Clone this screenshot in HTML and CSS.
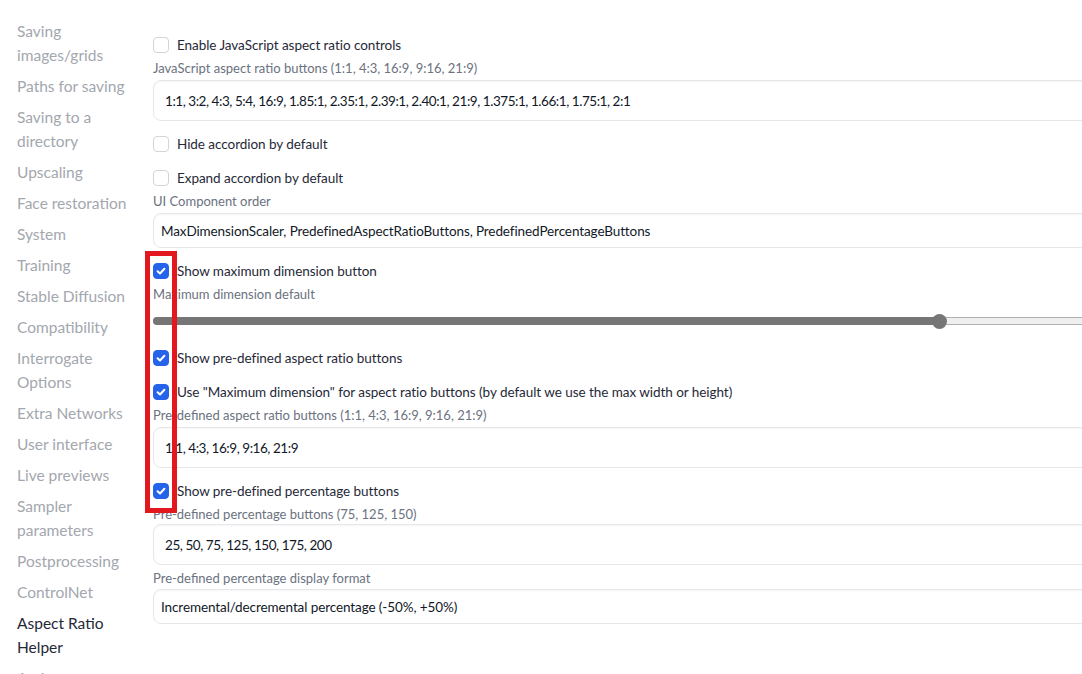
FILE: index.html
```html
<!DOCTYPE html>
<html lang="en">
<head>
<meta charset="utf-8">
<title>Settings - Aspect Ratio Helper</title>
<link rel="stylesheet" href="styles.css">
</head>
<body>
<div class="page">
  <nav class="sidebar">
    <a class="nav-item">Saving images/grids</a>
    <a class="nav-item">Paths for saving</a>
    <a class="nav-item">Saving to a directory</a>
    <a class="nav-item">Upscaling</a>
    <a class="nav-item">Face restoration</a>
    <a class="nav-item">System</a>
    <a class="nav-item">Training</a>
    <a class="nav-item">Stable Diffusion</a>
    <a class="nav-item">Compatibility</a>
    <a class="nav-item">Interrogate Options</a>
    <a class="nav-item">Extra Networks</a>
    <a class="nav-item">User interface</a>
    <a class="nav-item">Live previews</a>
    <a class="nav-item">Sampler parameters</a>
    <a class="nav-item">Postprocessing</a>
    <a class="nav-item">ControlNet</a>
    <a class="nav-item active">Aspect Ratio Helper</a>
    <a class="nav-item">Actions</a>
  </nav>

  <main class="settings">
    <label class="check-row first">
      <span class="box"></span>
      <span class="check-label">Enable JavaScript aspect ratio controls</span>
    </label>

    <div class="field">
      <div class="field-label">JavaScript aspect ratio buttons (1:1, 4:3, 16:9, 9:16, 21:9)</div>
      <div class="textbox">1:1, 3:2, 4:3, 5:4, 16:9, 1.85:1, 2.35:1, 2.39:1, 2.40:1, 21:9, 1.375:1, 1.66:1, 1.75:1, 2:1</div>
    </div>

    <label class="check-row">
      <span class="box"></span>
      <span class="check-label">Hide accordion by default</span>
    </label>

    <label class="check-row">
      <span class="box"></span>
      <span class="check-label">Expand accordion by default</span>
    </label>

    <div class="field">
      <div class="field-label">UI Component order</div>
      <div class="dropdown">MaxDimensionScaler, PredefinedAspectRatioButtons, PredefinedPercentageButtons</div>
    </div>

    <label class="check-row">
      <span class="box checked"><svg viewBox="0 0 16 16" width="16" height="16"><path d="M4.6 8.3 L7 10.5 L11.4 5.8" fill="none" stroke="#fff" stroke-width="2" stroke-linecap="round" stroke-linejoin="round"/></svg></span>
      <span class="check-label">Show maximum dimension button</span>
    </label>

    <div class="field-label slider-label">Maximum dimension default</div>
    <div class="slider">
      <div class="slider-track">
        <div class="slider-fill" style="width: 785px"></div>
        <div class="slider-thumb" style="left: 785px"></div>
      </div>
    </div>

    <label class="check-row">
      <span class="box checked"><svg viewBox="0 0 16 16" width="16" height="16"><path d="M4.6 8.3 L7 10.5 L11.4 5.8" fill="none" stroke="#fff" stroke-width="2" stroke-linecap="round" stroke-linejoin="round"/></svg></span>
      <span class="check-label">Show pre-defined aspect ratio buttons</span>
    </label>

    <label class="check-row">
      <span class="box checked"><svg viewBox="0 0 16 16" width="16" height="16"><path d="M4.6 8.3 L7 10.5 L11.4 5.8" fill="none" stroke="#fff" stroke-width="2" stroke-linecap="round" stroke-linejoin="round"/></svg></span>
      <span class="check-label">Use "Maximum dimension" for aspect ratio buttons (by default we use the max width or height)</span>
    </label>

    <div class="field">
      <div class="field-label">Pre-defined aspect ratio buttons (1:1, 4:3, 16:9, 9:16, 21:9)</div>
      <div class="textbox">1:1, 4:3, 16:9, 9:16, 21:9</div>
    </div>

    <label class="check-row">
      <span class="box checked"><svg viewBox="0 0 16 16" width="16" height="16"><path d="M4.6 8.3 L7 10.5 L11.4 5.8" fill="none" stroke="#fff" stroke-width="2" stroke-linecap="round" stroke-linejoin="round"/></svg></span>
      <span class="check-label">Show pre-defined percentage buttons</span>
    </label>

    <div class="field compact">
      <div class="field-label">Pre-defined percentage buttons (75, 125, 150)</div>
      <div class="textbox">25, 50, 75, 125, 150, 175, 200</div>
    </div>

    <div class="field last">
      <div class="field-label">Pre-defined percentage display format</div>
      <div class="dropdown">Incremental/decremental percentage (-50%, +50%)</div>
    </div>

    <div class="highlight"></div>
  </main>
</div>
</body>
</html>
```

FILE: styles.css
```css
html, body {
  margin: 0;
  padding: 0;
  background: #ffffff;
  overflow: hidden;
}

body {
  font-family: "Lato", "Noto Sans", "Liberation Sans", sans-serif;
  color: #1f2937;
  width: 1082px;
  height: 674px;
}

.page {
  display: flex;
  align-items: flex-start;
}

.sidebar {
  width: 118px;
  flex: 0 0 118px;
  padding: 19px 0 0 17px;
  display: flex;
  flex-direction: column;
  gap: 7px;
}

.nav-item {
  font-size: 15.5px;
  line-height: 24px;
  color: #a3a7ae;
  display: block;
}

.nav-item.active {
  color: #1f2937;
}

.settings {
  position: relative;
  margin-left: 18px;
  width: 980px;
  flex: 0 0 980px;
  padding-top: 35px;
  display: flex;
  flex-direction: column;
}

.check-row {
  display: flex;
  align-items: center;
  gap: 8px;
  height: 20px;
  margin-bottom: 14px;
}

.box {
  width: 16px;
  height: 16px;
  box-sizing: border-box;
  border: 1px solid #d1d5db;
  border-radius: 4px;
  background: #fff;
  flex: 0 0 16px;
  display: flex;
}

.box.checked {
  background: #2563eb;
  border-color: #2563eb;
}

.box svg {
  margin: -1px;
}

.check-label {
  font-size: 13.5px;
  line-height: 20px;
  color: #1f2937;
  white-space: nowrap;
  letter-spacing: -0.05px;
}

.check-row + .field,
.check-row + .slider-label {
  margin-top: -11px;
}

.field {
  display: flex;
  flex-direction: column;
  margin-bottom: 13px;
}

.field-label {
  font-size: 13px;
  line-height: 20px;
  color: #6b7280;
  margin-bottom: 2px;
  white-space: nowrap;
}

.field.compact .field-label {
  margin-bottom: 0;
}

.field.last {
  margin-top: -10px;
}

.field.last .field-label {
  margin-bottom: 1px;
}

.textbox,
.dropdown {
  box-sizing: border-box;
  border: 1px solid #e5e7eb;
  border-radius: 8px;
  background: #fff;
  box-shadow: inset 0 1px 2px rgba(0, 0, 0, 0.04);
  font-size: 13.5px;
  color: #111827;
  white-space: nowrap;
  display: flex;
  align-items: center;
}

.textbox {
  height: 41px;
  padding-left: 11px;
  letter-spacing: -0.45px;
}

.dropdown {
  height: 35px;
  padding-left: 7px;
  letter-spacing: -0.1px;
}

.slider-label {
  margin-bottom: 0;
}

.slider {
  height: 34px;
  display: flex;
  align-items: center;
  margin-top: 0;
  margin-bottom: 10px;
}

.slider-track {
  position: relative;
  width: 100%;
  height: 8px;
  box-sizing: border-box;
  background: #efefef;
  border: 1px solid #b0b0b0;
  border-radius: 4px;
}

.slider-fill {
  position: absolute;
  left: -1px;
  top: -1px;
  height: 8px;
  background: #767676;
  border-radius: 4px 0 0 4px;
}

.slider-thumb {
  position: absolute;
  top: 50%;
  width: 15px;
  height: 15px;
  margin-left: -7px;
  margin-top: -7.5px;
  background: #767676;
  border-radius: 50%;
}

.highlight {
  position: absolute;
  left: -8px;
  top: 251px;
  width: 32px;
  height: 262px;
  box-sizing: border-box;
  border: 5px solid #e3181f;
  pointer-events: none;
}
```
